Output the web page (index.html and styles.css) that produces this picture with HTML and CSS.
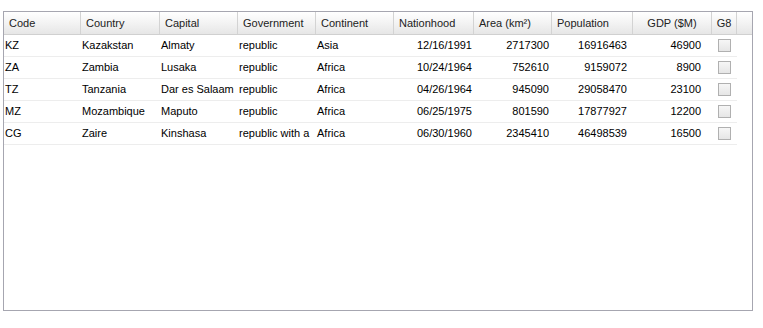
FILE: index.html
```html
<!DOCTYPE html>
<html lang="en">
<head>
    <meta charset="UTF-8">
    <title>Countries Grid</title>
    <link rel="stylesheet" href="styles.css">
</head>
<body>
<div class="grid">
    <div class="grid-header">
        <div class="hd">Code</div>
        <div class="hd">Country</div>
        <div class="hd">Capital</div>
        <div class="hd">Government</div>
        <div class="hd">Continent</div>
        <div class="hd">Nationhood</div>
        <div class="hd">Area (km²)</div>
        <div class="hd">Population</div>
        <div class="hd hd-center">GDP ($M)</div>
        <div class="hd hd-center">G8</div>
        <div class="hd hd-filler"></div>
    </div>
    <div class="grid-body">
        <div class="row">
            <div class="cell">KZ</div>
            <div class="cell">Kazakstan</div>
            <div class="cell">Almaty</div>
            <div class="cell">republic</div>
            <div class="cell">Asia</div>
            <div class="cell num date">12/16/1991</div>
            <div class="cell num area">2717300</div>
            <div class="cell num pop">16916463</div>
            <div class="cell num gdp">46900</div>
            <div class="cell check"><span class="box"></span></div>
        </div>
        <div class="row">
            <div class="cell">ZA</div>
            <div class="cell">Zambia</div>
            <div class="cell">Lusaka</div>
            <div class="cell">republic</div>
            <div class="cell">Africa</div>
            <div class="cell num date">10/24/1964</div>
            <div class="cell num area">752610</div>
            <div class="cell num pop">9159072</div>
            <div class="cell num gdp">8900</div>
            <div class="cell check"><span class="box"></span></div>
        </div>
        <div class="row">
            <div class="cell">TZ</div>
            <div class="cell">Tanzania</div>
            <div class="cell">Dar es Salaam</div>
            <div class="cell">republic</div>
            <div class="cell">Africa</div>
            <div class="cell num date">04/26/1964</div>
            <div class="cell num area">945090</div>
            <div class="cell num pop">29058470</div>
            <div class="cell num gdp">23100</div>
            <div class="cell check"><span class="box"></span></div>
        </div>
        <div class="row">
            <div class="cell">MZ</div>
            <div class="cell">Mozambique</div>
            <div class="cell">Maputo</div>
            <div class="cell">republic</div>
            <div class="cell">Africa</div>
            <div class="cell num date">06/25/1975</div>
            <div class="cell num area">801590</div>
            <div class="cell num pop">17877927</div>
            <div class="cell num gdp">12200</div>
            <div class="cell check"><span class="box"></span></div>
        </div>
        <div class="row">
            <div class="cell">CG</div>
            <div class="cell">Zaire</div>
            <div class="cell">Kinshasa</div>
            <div class="cell">republic with a multiparty presidential regime</div>
            <div class="cell">Africa</div>
            <div class="cell num date">06/30/1960</div>
            <div class="cell num area">2345410</div>
            <div class="cell num pop">46498539</div>
            <div class="cell num gdp">16500</div>
            <div class="cell check"><span class="box"></span></div>
        </div>
    </div>
</div>
</body>
</html>
```

FILE: styles.css
```css
body {
    margin: 0;
    padding: 11px 0 0 3px;
    background: #fff;
    font-family: "Liberation Sans", Arial, sans-serif;
    font-size: 11px;
}
.grid {
    width: 750px;
    height: 300px;
    box-sizing: border-box;
    border: 1px solid #a6a6b0;
    overflow: hidden;
}
.grid-header {
    display: grid;
    grid-template-columns: 77px 79px 78px 78px 78px 80px 78px 81px 79px 25px 15px;
    height: 23px;
    box-sizing: border-box;
    border-bottom: 1px solid #d0d0d0;
    background: linear-gradient(#ffffff, #f3f3f3 50%, #e6e6e6);
}
.hd {
    display: flex;
    align-items: center;
    padding-left: 5px;
    border-right: 1px solid #d3d3d3;
    color: #222;
    white-space: nowrap;
    overflow: hidden;
}
.hd-center {
    justify-content: center;
    padding-left: 0;
}
.hd-filler {
    border-right: none;
    padding: 0;
}
.grid-body {
    margin-right: 15px;
}
.row {
    display: grid;
    grid-template-columns: 77px 79px 78px 78px 78px 80px 78px 81px 79px 25px;
    height: 22px;
    box-sizing: border-box;
    border-bottom: 1px solid #ededed;
}
/* long values wrap and the extra lines are clipped */
.cell {
    height: 21px;
    line-height: 21px;
    padding-left: 1px;
    padding-right: 2px;
    color: #000;
    overflow: hidden;
}
.num {
    text-align: right;
    padding-left: 0;
}
.date { padding-right: 2px; }
.area { padding-right: 3px; }
.pop { padding-right: 6px; }
.gdp { padding-right: 11px; }
.check {
    display: flex;
    align-items: center;
    justify-content: center;
    padding: 0;
}
.box {
    width: 11px;
    height: 11px;
    border: 1px solid #b0b0b0;
    background: linear-gradient(#f6f6f6, #e6e6e6);
}
```
